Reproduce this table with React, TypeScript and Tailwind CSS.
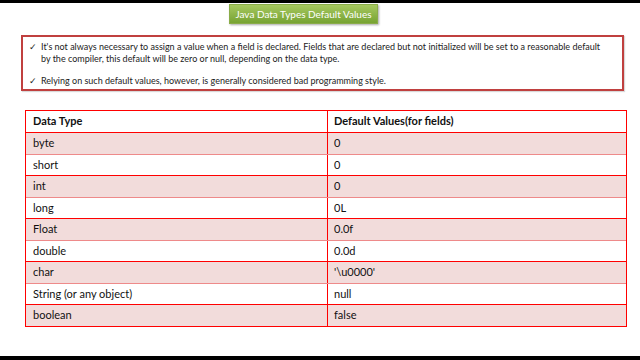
import React from "react";

const rows: [string, string][] = [
  ["byte", "0"],
  ["short", "0"],
  ["int", "0"],
  ["long", "0L"],
  ["Float", "0.0f"],
  ["double", "0.0d"],
  ["char", "'\\u0000'"],
  ["String (or any object)", "null"],
  ["boolean", "false"],
];

const App: React.FC = () => {
  return (
    <div
      className="w-[640px] h-[360px] bg-white flex flex-col overflow-hidden"
      style={{ fontFamily: "Lato, 'Open Sans', sans-serif" }}
    >
      <div className="h-[3px] bg-black shrink-0" />

      {/* title */}
      <div className="ml-[229px] mt-[1px] w-[149px] h-[20px] flex items-center justify-center text-white text-[10px] bg-gradient-to-b from-[#a6c85f] to-[#77a332] border border-[#8aac48] shadow-[1px_1px_2px_rgba(0,0,0,0.35)]">
        Java Data Types Default Values
      </div>

      {/* notes */}
      <div className="ml-[21px] mt-[11px] w-[603px] h-[56px] border-2 border-[#c0403f] px-[6px] pt-[4px] text-[9px] text-[#222] leading-[12px] shadow-[1px_1px_1px_rgba(0,0,0,0.15)]">
        <div className="flex gap-[6px]">
          <span className="w-[6px]">✓</span>
          <p className="whitespace-nowrap">
            It's not always necessary to assign a value when a field is declared. Fields that are declared but not initialized will be set to a reasonable default
            <br />
            by the compiler, this default will be zero or null, depending on the data type.
          </p>
        </div>
        <div className="flex gap-[6px] mt-[10px]">
          <span className="w-[6px]">✓</span>
          <p>Relying on such default values, however, is generally considered bad programming style.</p>
        </div>
      </div>

      {/* table */}
      <div className="ml-[25px] mt-[19px] w-[602px] border border-[#ff0000] text-[11px] text-[#111]">
        <div className="grid grid-cols-[302px_1fr] h-[21px] bg-white font-bold">
          <div className="pl-[7px] flex items-center border-r border-[#ff0000]">Data Type</div>
          <div className="pl-[6px] flex items-center">Default Values(for fields)</div>
        </div>
        {rows.map(([type, value], i) => (
          <div
            key={type}
            className={`grid grid-cols-[302px_1fr] h-[21.5px] border-t ${
              i % 2 === 0 ? "bg-[#f2dcdb] border-[#ff0000]" : "bg-white border-[#ee8a8a]"
            }`}
          >
            <div className="pl-[7px] flex items-center border-r border-[#ff0000]">{type}</div>
            <div className="pl-[6px] flex items-center">{value}</div>
          </div>
        ))}
      </div>

      <div className="flex-1" />
      <div className="h-[4px] bg-black shrink-0" />
    </div>
  );
};

export default App;
